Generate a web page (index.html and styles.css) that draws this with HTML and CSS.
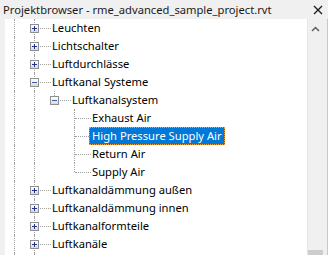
FILE: index.html
```html
<!DOCTYPE html>
<html lang="de">
<head>
    <meta charset="UTF-8">
    <meta name="viewport" content="width=device-width, initial-scale=1.0">
    <title>Projektbrowser</title>
    <link rel="stylesheet" href="styles.css">
</head>
<body>
    <div id="browser">
        <div class="titlebar">
            <span class="title">Projektbrowser - rme_advanced_sample_project.rvt</span>
            <svg class="close" width="10" height="10" viewBox="0 0 10 10">
                <path d="M1 1L9 9M9 1L1 9" stroke="#1a1a1a" stroke-width="1.3"/>
            </svg>
        </div>
        <div class="content">
            <div class="tree">
                <div class="row">
                    <span class="g v"></span><span class="g t"><span class="box plus"></span></span>
                    <span class="label">Leuchten</span>
                </div>
                <div class="row">
                    <span class="g v"></span><span class="g t"><span class="box plus"></span></span>
                    <span class="label">Lichtschalter</span>
                </div>
                <div class="row">
                    <span class="g v"></span><span class="g t"><span class="box plus"></span></span>
                    <span class="label">Luftdurchlässe</span>
                </div>
                <div class="row">
                    <span class="g v"></span><span class="g t"><span class="box minus"></span></span>
                    <span class="label">Luftkanal Systeme</span>
                </div>
                <div class="row">
                    <span class="g v"></span><span class="g v"></span><span class="g l"><span class="box minus"></span></span>
                    <span class="label">Luftkanalsystem</span>
                </div>
                <div class="row">
                    <span class="g v"></span><span class="g v"></span><span class="g"></span><span class="g t"></span>
                    <span class="label">Exhaust Air</span>
                </div>
                <div class="row">
                    <span class="g v"></span><span class="g v"></span><span class="g"></span><span class="g t"></span>
                    <span class="label selected">High Pressure Supply Air</span>
                </div>
                <div class="row">
                    <span class="g v"></span><span class="g v"></span><span class="g"></span><span class="g t"></span>
                    <span class="label">Return Air</span>
                </div>
                <div class="row">
                    <span class="g v"></span><span class="g v"></span><span class="g"></span><span class="g l"></span>
                    <span class="label">Supply Air</span>
                </div>
                <div class="row">
                    <span class="g v"></span><span class="g t"><span class="box plus"></span></span>
                    <span class="label">Luftkanaldämmung außen</span>
                </div>
                <div class="row">
                    <span class="g v"></span><span class="g t"><span class="box plus"></span></span>
                    <span class="label">Luftkanaldämmung innen</span>
                </div>
                <div class="row">
                    <span class="g v"></span><span class="g t"><span class="box plus"></span></span>
                    <span class="label">Luftkanalformteile</span>
                </div>
                <div class="row">
                    <span class="g v"></span><span class="g t"><span class="box plus"></span></span>
                    <span class="label">Luftkanäle</span>
                </div>
                <div class="row">
                    <span class="g v"></span><span class="g t"><span class="box plus"></span></span>
                </div>
            </div>
            <div class="scrollbar">
                <svg class="arrow-up" width="9" height="6" viewBox="0 0 9 6">
                    <path d="M1 5L4.5 1.5L8 5" fill="none" stroke="#606060" stroke-width="1.5"/>
                </svg>
                <div class="thumb"></div>
            </div>
            <div class="edge"></div>
        </div>
    </div>
</body>
</html>
```

FILE: styles.css
```css
body {
    margin: 0;
    font-family: "Noto Sans", "Open Sans", sans-serif;
    font-size: 11.2px;
    color: #000;
    background: #f0f0f0;
}
#browser {
    width: 328px;
    height: 255px;
    overflow: hidden;
    background: #f0f0f0;
}
.titlebar {
    height: 19px;
    display: flex;
    align-items: center;
    padding-left: 3px;
    padding-right: 5px;
}
.title {
    flex: 1;
    white-space: nowrap;
    line-height: 18px;
    color: #1b1b1b;
}
.close {
    margin-top: 1px;
}
.content {
    display: flex;
    height: 236px;
    padding-left: 5px;
}
.tree {
    flex: 1;
    background: #fff;
    overflow: hidden;
}
.row {
    display: flex;
    height: 18px;
    white-space: nowrap;
}
.g {
    position: relative;
    flex: none;
    width: 20px;
    height: 18px;
}
.g.v::before, .g.t::before, .g.l::before {
    content: '';
    position: absolute;
    left: 9px;
    top: 0;
    height: 18px;
    border-left: 1px dotted #a0a0a0;
}
.g.l::before {
    height: 9px;
}
.g.t::after, .g.l::after {
    content: '';
    position: absolute;
    left: 10px;
    top: 9px;
    width: 16px;
    border-top: 1px dotted #a0a0a0;
}
.box {
    position: absolute;
    left: 5px;
    top: 5px;
    width: 7px;
    height: 7px;
    border: 1px solid #8f8f8f;
    background: linear-gradient(#ffffff, #dadada);
    z-index: 1;
}
.box::before {
    content: '';
    position: absolute;
    left: 1px;
    top: 3px;
    width: 5px;
    height: 1px;
    background: #1f3590;
}
.box.plus::after {
    content: '';
    position: absolute;
    left: 3px;
    top: 1px;
    width: 1px;
    height: 5px;
    background: #1f3590;
}
.box.minus::before {
    background: #3a5cab;
}
.label {
    position: relative;
    z-index: 2;
    margin-left: 4px;
    padding: 0 2px;
    height: 16px;
    line-height: 15px;
    border: 1px solid transparent;
}
.label.selected {
    background: #0078d7;
    color: #fff;
    border: 1px dotted #f0a040;
}
.scrollbar {
    position: relative;
    flex: none;
    width: 17px;
    background: #f0f0f0;
    border-left: 1px solid #e6e6e6;
    box-sizing: border-box;
}
.arrow-up {
    position: absolute;
    left: 3px;
    top: 7px;
}
.thumb {
    position: absolute;
    left: 0;
    bottom: 0;
    width: 15px;
    height: 5px;
    background: #cdcdcd;
}
.edge {
    flex: none;
    width: 4px;
    background: #f0f0f0;
    border-right: 1px solid #c8c8c8;
    box-sizing: border-box;
}
```
